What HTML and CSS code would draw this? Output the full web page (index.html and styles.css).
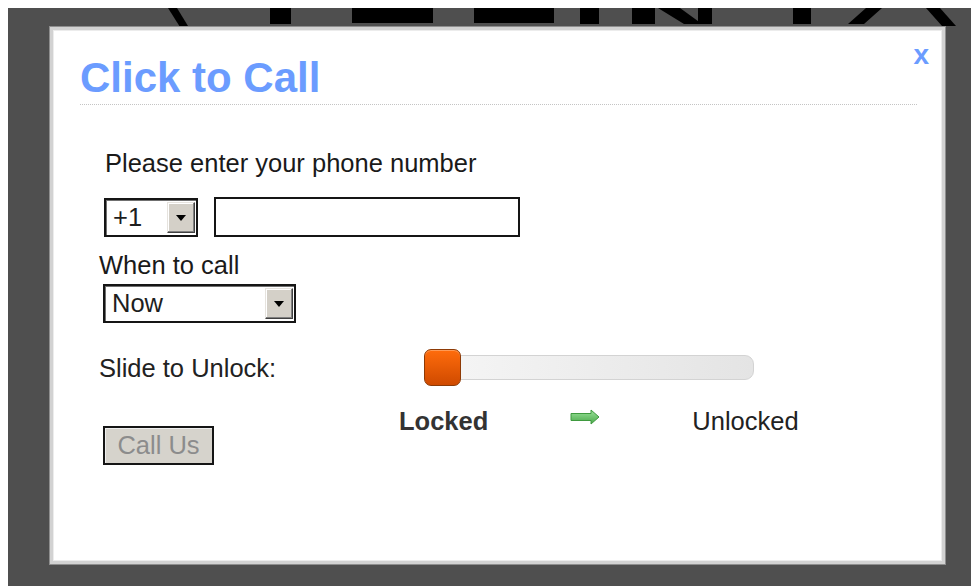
FILE: index.html
```html
<!DOCTYPE html>
<html lang="en">
<head>
<meta charset="utf-8">
<title>Click to Call</title>
<link rel="stylesheet" href="styles.css">
</head>
<body>
<div class="backdrop">
  <svg class="backdrop-art" width="963" height="24" viewBox="0 0 963 24" aria-hidden="true">
    <path d="M160 0 L169 0 L180 18 L172 19 Z" fill="#000"/>
    <rect x="262" y="0" width="21" height="16" fill="#000"/>
    <rect x="344" y="0" width="81" height="15" fill="#000"/>
    <rect x="466" y="0" width="80" height="15" fill="#000"/>
    <rect x="572" y="0" width="19" height="16" fill="#000"/>
    <rect x="624" y="0" width="23" height="16" fill="#000"/>
    <path d="M650 0 L672 0 L694 16 L676 16 Z" fill="#000"/>
    <rect x="690" y="0" width="14" height="16" fill="#000"/>
    <rect x="785" y="0" width="18" height="16" fill="#000"/>
    <path d="M858 0 L874 0 L856 16 L840 16 Z" fill="#000"/>
    <path d="M918 0 L932 0 L948 18 L934 18 Z" fill="#000"/>
  </svg>

  <div class="dialog">
    <span class="close">x</span>
    <h1 class="title">Click to Call</h1>

    <form class="form">
      <p class="prompt">Please enter your phone number</p>

      <div class="phone-row">
        <div class="select select-code">
          <span class="select-value">+1</span>
          <span class="select-btn"><span class="caret"></span></span>
        </div>
        <input class="phone-input" type="text">
      </div>

      <p class="when-label">When to call</p>
      <div class="select select-when">
        <span class="select-value">Now</span>
        <span class="select-btn"><span class="caret"></span></span>
      </div>

      <div class="slide-row">
        <span class="slide-label">Slide to Unlock:</span>
        <div class="slider">
          <div class="slider-track"></div>
          <div class="slider-handle"></div>
        </div>
      </div>

      <div class="bottom-row">
        <button class="call-btn" type="button" disabled>Call Us</button>
        <span class="state state-locked">Locked</span>
        <svg class="state-arrow" width="30" height="16" viewBox="0 0 30 16" aria-hidden="true">
          <defs>
            <linearGradient id="arrowFill" x1="0" y1="0" x2="0" y2="1">
              <stop offset="0" stop-color="#9be39b"/>
              <stop offset="1" stop-color="#4aa84a"/>
            </linearGradient>
          </defs>
          <path d="M1 4.5 H21 V1 L29 8 L21 15 V11.5 H1 Z" fill="url(#arrowFill)" stroke="#3f9a3f" stroke-width="1"/>
        </svg>
        <span class="state state-unlocked">Unlocked</span>
      </div>
    </form>
  </div>
</div>
</body>
</html>
```

FILE: styles.css
```css
html, body {
  margin: 0;
  padding: 0;
  background: #ffffff;
}

body {
  padding: 8px 0 0 8px;
  font-family: "Liberation Sans", Arial, sans-serif;
  color: #222222;
}

.backdrop {
  position: relative;
  width: 963px;
  height: 578px;
  background: #4f4f4f;
  padding: 19px 0 0 42px;
  box-sizing: border-box;
  overflow: hidden;
}

.backdrop-art {
  position: absolute;
  left: 0;
  top: 0;
}

.dialog {
  position: relative;
  width: 895px;
  height: 537px;
  box-sizing: border-box;
  background: #ffffff;
  border: 3px solid #d2d2d2;
  box-shadow: 0 0 0 1px #8e8e8e, inset 0 0 0 1px #ececec;
  padding: 24px 25px 0 27px;
}

.close {
  position: absolute;
  top: 11px;
  right: 13px;
  font-size: 28px;
  line-height: 28px;
  font-weight: bold;
  color: #6b9cff;
}

.title {
  margin: 0;
  font-size: 42px;
  line-height: 48px;
  font-weight: bold;
  color: #6b9cff;
  padding-bottom: 2px;
  border-bottom: 1px dotted #c4c4c4;
}

.form {
  margin: 0 0 0 19px;
  font-size: 25.5px;
  line-height: 30px;
}

.prompt {
  margin: 43px 0 0 6px;
  color: #1a1a1a;
}

.phone-row {
  display: flex;
  gap: 16px;
  margin: 20px 0 0 5px;
}

.select {
  display: flex;
  align-items: stretch;
  height: 39px;
  box-sizing: border-box;
  border: 2px solid #151515;
  background: #ffffff;
  padding: 2px 1px 2px 2px;
  box-shadow: inset 1px 1px 0 #707070;
}

.select-value {
  flex: 1;
  padding-left: 5px;
  line-height: 31px;
  color: #1e1e1e;
}

.select-btn {
  width: 28px;
  box-sizing: border-box;
  background: #d4d0c8;
  border: 1px solid;
  border-color: #e6e3de #404040 #404040 #e6e3de;
  box-shadow: inset -1px -1px 0 #808080, inset 1px 1px 0 #ffffff;
  display: flex;
  align-items: center;
  justify-content: center;
}

.caret {
  width: 0;
  height: 0;
  border-top: 6px solid #000;
  border-left: 5.5px solid transparent;
  border-right: 5.5px solid transparent;
}

.select-code {
  width: 94px;
}

.phone-input {
  width: 306px;
  height: 40px;
  box-sizing: border-box;
  margin: -1px 0 0 0;
  border: 2px solid #151515;
  background: #ffffff;
  outline: none;
  padding: 0 6px;
  font: inherit;
}

.when-label {
  margin: 13px 0 0 0;
  color: #1a1a1a;
}

.select-when {
  width: 193px;
  margin: 4px 0 0 4px;
}

.slide-row {
  display: flex;
  align-items: center;
  margin-top: 26px;
  height: 37px;
}

.slide-label {
  width: 325px;
  flex: none;
}

.slider {
  position: relative;
  width: 330px;
  height: 37px;
  padding-top: 6px;
  box-sizing: border-box;
}

.slider-track {
  margin-left: 2px;
  height: 25px;
  box-sizing: border-box;
  border: 1px solid #d3d3d3;
  border-radius: 9px;
  background: linear-gradient(to right, #f6f6f6, #e4e4e4);
}

.slider-handle {
  position: absolute;
  left: 0;
  top: 0;
  width: 37px;
  height: 37px;
  box-sizing: border-box;
  border: 1px solid #8d3a06;
  border-radius: 7px;
  background: linear-gradient(#ff6c0c, #cf4a00);
  box-shadow: inset 0 1px 0 #ff9a55;
}

.bottom-row {
  display: flex;
  align-items: flex-start;
  margin-top: 20px;
}

.call-btn {
  margin: 20px 0 0 4px;
  width: 111px;
  height: 39px;
  box-sizing: border-box;
  border: 2px solid #151515;
  background: #d6d3cc;
  box-shadow: inset 1px 1px 0 #eeeeee;
  color: #8c8c8c;
  font: inherit;
  line-height: 33px;
  padding: 0;
}

.state {
  display: block;
}

.state-locked {
  margin-left: 185px;
  font-weight: bold;
  color: #333333;
}

.state-arrow {
  margin: 3px 0 0 82px;
}

.state-unlocked {
  margin-left: 92px;
  color: #222222;
}
```
